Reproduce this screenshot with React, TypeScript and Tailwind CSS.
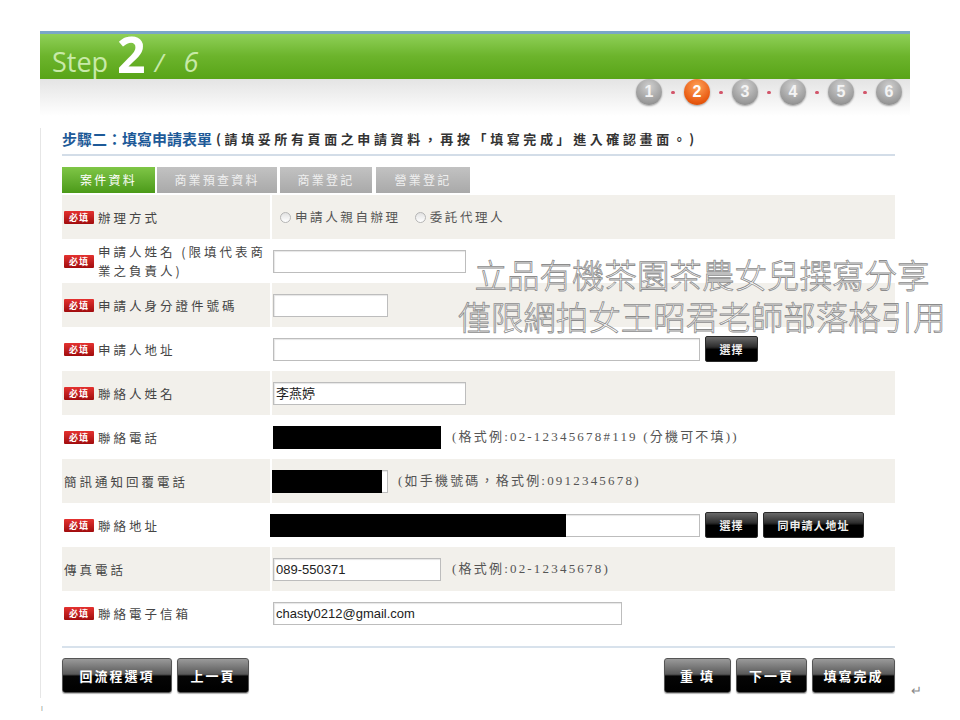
import React from 'react'

const cjk = "font-['Noto_Sans_CJK_TC','Noto_Sans',sans-serif]"

const Req = () => (
    <span className="inline-flex h-[13px] w-[30px] shrink-0 items-center justify-center rounded-[1px] bg-gradient-to-b from-[#e4312f] to-[#a10b0d] text-[9px] font-bold leading-none tracking-[1px] text-white">
        必填
    </span>
)

interface RowProp {
    label: React.ReactNode
    req?: boolean
    gray?: boolean
    children?: React.ReactNode
}

const Row = ({ label, req, gray, children }: RowProp) => (
    <div className={gray ? 'flex h-[44px] bg-[#f2f0eb]' : 'flex h-[44px] bg-white'}>
        <div className="flex w-[208px] items-center gap-[4px] pl-[2px] text-[12.5px] leading-[19px] tracking-[3px] text-[#454545]">
            {req && <Req />}
            <div>{label}</div>
        </div>
        <div className="w-[2px] bg-white" />
        <div className="flex flex-1 items-center">{children}</div>
    </div>
)

const Box = ({ w, value, black }: { w: string; value?: string; black?: string }) => (
    <div className={`relative h-[23px] ${w} border border-[#bdbdbd] bg-white shadow-[inset_1px_1px_1px_rgba(0,0,0,0.1)]`}>
        {value && (
            <span className="absolute left-[2px] top-[2px] font-['Liberation_Sans','Noto_Sans_CJK_TC',sans-serif] text-[13px] leading-[17px] text-[#222]">
                {value}
            </span>
        )}
        {black && <div className={`absolute -left-[1px] -top-[1px] h-[23px] ${black} bg-black`} />}
    </div>
)

const SmallBtn = ({ text, w }: { text: string; w: string }) => (
    <div className={`flex h-[26px] ${w} items-center justify-center rounded-[2px] border border-[#2a2a2a] bg-[linear-gradient(to_bottom,#6a6a6a_0%,#2c2c2c_42%,#000_52%,#000_100%)] text-[11px] font-bold tracking-[1px] text-[#eee]`}>
        {text}
    </div>
)

const BigBtn = ({ text, w }: { text: string; w: string }) => (
    <div className={`flex h-[35px] ${w} items-center justify-center rounded-[3px] border border-[#555] bg-[linear-gradient(to_bottom,#9a9a9a_0%,#5a5a5a_46%,#050505_52%,#000_100%)] text-[13px] font-bold tracking-[2px] text-white shadow-[0_1px_1px_rgba(0,0,0,0.3)]`}>
        {text}
    </div>
)

const Radio = () => (
    <span className="inline-block h-[11px] w-[11px] rounded-full border border-[#b5b5b5] bg-gradient-to-b from-[#e2e2e2] to-white" />
)

const Hint = ({ text }: { text: string }) => (
    <span className="font-['Liberation_Serif','Noto_Sans_CJK_TC',serif] text-[13px] tracking-[2.2px] text-[#555]">{text}</span>
)

const Circle = ({ n, active }: { n: number; active?: boolean }) => (
    <div
        className={
            active
                ? 'flex h-[26px] w-[26px] items-center justify-center rounded-full bg-[radial-gradient(circle_at_50%_30%,#ffa35a,#e8580f_70%,#c44404)] text-[16px] font-bold text-white shadow-[0_1px_2px_rgba(0,0,0,0.35)]'
                : 'flex h-[26px] w-[26px] items-center justify-center rounded-full bg-[radial-gradient(circle_at_50%_30%,#d0d0d0,#9a9a9a_70%,#7c7c7c)] text-[16px] font-bold text-[#f4f4f4] shadow-[0_1px_2px_rgba(0,0,0,0.35)]'
        }
    >
        {n}
    </div>
)

const Dot = () => <span className="mx-[9px] h-[3px] w-[4px] rounded-full bg-[#d2556a]" />

export default function App() {
    return (
        <div className={`relative h-[720px] w-[960px] overflow-hidden bg-white ${cjk}`}>
            <div className="ml-[40px] mt-[31px] w-[870px]">
                {/* green step bar */}
                <div className="flex h-[52px] items-end border-t-[3px] border-[#7aa7c8] bg-[linear-gradient(to_bottom,#8fd058_0%,#6cb42c_45%,#55a114_100%)] pb-[6px] pl-[12px] font-['Open_Sans','Liberation_Sans',sans-serif]">
                    <span className="text-[27px] leading-[30px] text-[#c8eaa8]">Step</span>
                    <span className="ml-[9px] text-[50px] font-bold leading-[46px] text-white">2</span>
                    <span className="ml-[9px] text-[25px] italic leading-[30px] text-[#c8eaa8]">/</span>
                    <span className="ml-[20px] text-[27px] italic leading-[30px] text-[#c8eaa8]">6</span>
                </div>
                <div className="h-[37px] bg-gradient-to-b from-[#e4e4e4] to-white">
                    <div className="-mt-[4px] flex items-center justify-end pr-[8px] font-['Liberation_Sans',sans-serif]">
                        <Circle n={1} />
                        <Dot />
                        <Circle n={2} active />
                        <Dot />
                        <Circle n={3} />
                        <Dot />
                        <Circle n={4} />
                        <Dot />
                        <Circle n={5} />
                        <Dot />
                        <Circle n={6} />
                    </div>
                </div>

                <div className="border-l border-[#e6e6e6] pl-[21px] pr-[15px] pb-[5px]">
                    <div className="mt-[12px] flex h-[22px] items-center">
                        <span className="text-[15px] font-bold text-[#1e5a98]">步驟二：填寫申請表單</span>
                        <span className="ml-[4px] text-[13px] font-bold tracking-[3.6px] text-[#333]">
                            (請填妥所有頁面之申請資料，再按「填寫完成」進入確認畫面。)
                        </span>
                    </div>
                    <div className="mt-[4px] h-[2px] bg-[#d3dde8]" />

                    {/* tabs */}
                    <div className="mt-[11px] flex h-[26px] gap-[2px] text-[12px] tracking-[2.2px]">
                        <div className="flex w-[93px] items-center justify-center bg-gradient-to-b from-[#7fc646] to-[#4b9a17] text-white">案件資料</div>
                        <div className="flex w-[120px] items-center justify-center bg-gradient-to-b from-[#c2c2c2] to-[#a9a9a9] text-[#efefef]">商業預查資料</div>
                        <div className="ml-[1px] flex w-[92px] items-center justify-center bg-gradient-to-b from-[#c2c2c2] to-[#a9a9a9] text-[#efefef]">商業登記</div>
                        <div className="ml-[2px] flex w-[94px] items-center justify-center bg-gradient-to-b from-[#c2c2c2] to-[#a9a9a9] text-[#efefef]">營業登記</div>
                    </div>

                    {/* form rows */}
                    <div className="mt-[2px]">
                        <Row label="辦理方式" req gray>
                            <div className="ml-[8px] flex items-center gap-[4px] text-[12.5px] tracking-[2.6px] text-[#555]">
                                <Radio />
                                <span>申請人親自辦理</span>
                                <span className="ml-[6px]" />
                                <Radio />
                                <span>委託代理人</span>
                            </div>
                        </Row>
                        <Row label={<>申請人姓名 (限填代表商<br />業之負責人)</>} req>
                            <div className="ml-[1px]"><Box w="w-[193px]" /></div>
                        </Row>
                        <Row label="申請人身分證件號碼" req gray>
                            <div className="ml-[1px]"><Box w="w-[115px]" /></div>
                        </Row>
                        <Row label="申請人地址" req>
                            <div className="ml-[1px] flex items-center gap-[5px]">
                                <Box w="w-[427px]" />
                                <SmallBtn text="選擇" w="w-[53px]" />
                            </div>
                        </Row>
                        <Row label="聯絡人姓名" req gray>
                            <div className="ml-[1px]"><Box w="w-[193px]" value="李燕婷" /></div>
                        </Row>
                        <Row label="聯絡電話" req>
                            <div className="ml-[1px] flex items-center gap-[11px]">
                                <Box w="w-[168px]" black="w-[168px]" />
                                <Hint text="(格式例:02-12345678#119 (分機可不填))" />
                            </div>
                        </Row>
                        <Row label="簡訊通知回覆電話" gray>
                            <div className="flex items-center gap-[10px]">
                                <Box w="w-[116px]" black="w-[110px]" />
                                <Hint text="(如手機號碼，格式例:0912345678)" />
                            </div>
                        </Row>
                        <Row label="聯絡地址" req>
                            <div className="-ml-[2px] flex items-center gap-[5px]">
                                <Box w="w-[430px]" black="w-[296px]" />
                                <SmallBtn text="選擇" w="w-[53px]" />
                                <SmallBtn text="同申請人地址" w="w-[101px]" />
                            </div>
                        </Row>
                        <Row label="傳真電話" gray>
                            <div className="ml-[1px] flex items-center gap-[11px]">
                                <Box w="w-[168px]" value="089-550371" />
                                <Hint text="(格式例:02-12345678)" />
                            </div>
                        </Row>
                        <Row label="聯絡電子信箱" req>
                            <div className="ml-[1px]"><Box w="w-[349px]" value="chasty0212@gmail.com" /></div>
                        </Row>
                    </div>

                    <div className="mt-[11px] h-[2px] bg-[#d8e2ec]" />

                    <div className="mt-[10px] flex items-center">
                        <BigBtn text="回流程選項" w="w-[110px]" />
                        <div className="ml-[5px]"><BigBtn text="上一頁" w="w-[72px]" /></div>
                        <div className="flex-1" />
                        <BigBtn text="重 填" w="w-[67px]" />
                        <div className="ml-[5px]"><BigBtn text="下一頁" w="w-[71px]" /></div>
                        <div className="ml-[5px]"><BigBtn text="填寫完成" w="w-[83px]" /></div>
                    </div>
                </div>
            </div>

            {/* watermark */}
            <div className="absolute left-[447px] top-[253px] w-[510px] text-center text-[32.5px] font-light leading-[42px] text-white [-webkit-text-stroke:0.8px_#8c8c8c]">
                <div>立品有機茶園茶農女兒撰寫分享</div>
                <div>僅限網拍女王昭君老師部落格引用</div>
            </div>

            <span className="absolute left-[911px] top-[680px] text-[13px] text-[#888]">↵</span>
            <span className="absolute left-[41px] top-[702px] text-[11px] leading-[14px] text-[#888]">ˡ</span>
        </div>
    )
}
